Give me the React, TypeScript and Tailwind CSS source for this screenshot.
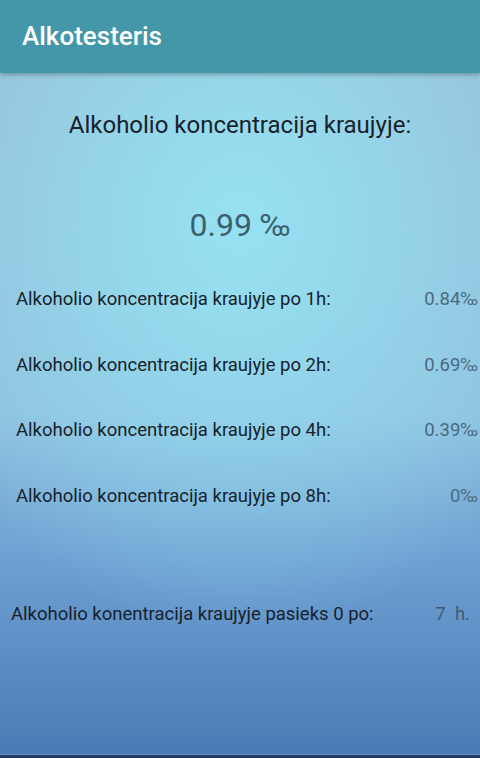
import React from "react";

const rows = [
  { label: "Alkoholio koncentracija kraujyje po 1h:", value: "0.84‰" },
  { label: "Alkoholio koncentracija kraujyje po 2h:", value: "0.69‰" },
  { label: "Alkoholio koncentracija kraujyje po 4h:", value: "0.39‰" },
  { label: "Alkoholio koncentracija kraujyje po 8h:", value: "0‰" },
];

export default function App() {
  return (
    <div className="flex h-[758px] w-[480px] flex-col overflow-hidden font-['Roboto',sans-serif]">
      <header className="z-10 flex h-[73px] shrink-0 items-center bg-[#4497a8] px-[22px] shadow-[0_2px_4px_rgba(0,0,0,0.25)]">
        <h1 className="text-[26px] font-medium text-white">Alkotesteris</h1>
      </header>
      <main className="flex flex-1 flex-col bg-[radial-gradient(ellipse_75%_60%_at_50%_22%,rgba(150,226,242,1)_0%,rgba(150,226,242,0.6)_45%,rgba(150,226,242,0)_100%),linear-gradient(to_bottom,#98bcd6_0%,#8fbede_50%,#6d9fd2_72%,#4b7bb6_100%)]">
        <p className="mt-[37px] text-center text-[24px] leading-[30px] text-[#17222c]">
          Alkoholio koncentracija kraujyje:
        </p>
        <p className="mt-[66px] text-center text-[32px] leading-[38px] text-[#3b5f6e]">
          0.99 ‰
        </p>
        <div className="mt-[44px] flex flex-col gap-[41.5px] pl-[16px] pr-[2px]">
          {rows.map((r) => (
            <div key={r.label} className="flex h-[24px] items-center justify-between text-[18.5px]">
              <span className="text-[#17222c]">{r.label}</span>
              <span className="text-[#4b6a80]">{r.value}</span>
            </div>
          ))}
        </div>
        <div className="mt-[94px] flex h-[24px] items-center justify-between pl-[11px] pr-[10px] text-[18.5px]">
          <span className="text-[#17222c]">Alkoholio konentracija kraujyje pasieks 0 po:</span>
          <span className="whitespace-pre text-[#3e5a73]">7  h.</span>
        </div>
      </main>
      <div className="h-[4px] shrink-0 border-t border-[#6b8fbf] bg-[#1e3a66]" />
    </div>
  );
}
